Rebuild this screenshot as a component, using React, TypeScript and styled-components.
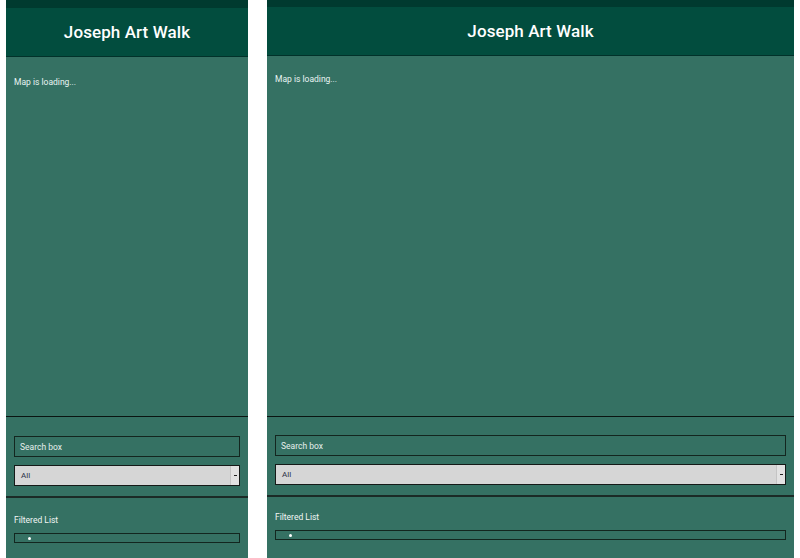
import React from "react";
import styled, { createGlobalStyle } from "styled-components";

const Global = createGlobalStyle`
  html, body { margin: 0; padding: 0; background: #ffffff; }
  body { font-family: Roboto, "Liberation Sans", sans-serif; }
`;

const Page = styled.div`
  display: flex;
  gap: 19px;
  padding-left: 6px;
  height: 558px;
  overflow: hidden;
`;

const Panel = styled.div<{ $w: number }>`
  width: ${(p) => p.$w}px;
  height: 558px;
  display: flex;
  flex-direction: column;
  background: #357163;
  overflow: hidden;
`;

const TopStrip = styled.div<{ $h: number }>`
  height: ${(p) => p.$h}px;
  background: #003a2f;
  flex: none;
`;

const Header = styled.header`
  height: 48px;
  flex: none;
  background: #024d3e;
  border-bottom: 1px solid #01322a;
  display: flex;
  align-items: center;
  justify-content: center;
`;

const Title = styled.h1`
  margin: 0;
  font-family: Roboto, "Liberation Sans", sans-serif;
  font-weight: 500;
  font-size: 17px;
  color: #ffffff;
  letter-spacing: 0.1px;
`;

const MapArea = styled.div<{ $pt: number }>`
  flex: 1;
  padding: ${(p) => p.$pt}px 8px 0;
`;

const SmallText = styled.div<{ $color?: string }>`
  font-size: 8.5px;
  line-height: 10px;
  color: ${(p) => p.$color || "#e8f4f2"};
`;

const Controls = styled.div<{ $h: number; $pt: number }>`
  height: ${(p) => p.$h}px;
  flex: none;
  box-sizing: border-box;
  border-top: 1px solid #0a1411;
  padding: ${(p) => p.$pt}px 8px 0;
  display: flex;
  flex-direction: column;
  gap: 8px;
`;

const SearchBox = styled.div`
  height: 21px;
  box-sizing: border-box;
  border: 1.5px solid #13261f;
  display: flex;
  align-items: center;
  padding-left: 5px;
  font-size: 8.5px;
  color: #e6efec;
`;

const Select = styled.div`
  height: 21px;
  box-sizing: border-box;
  border: 1.5px solid #151a18;
  background: #d6d6d6;
  display: flex;
  align-items: center;
  font-size: 8px;
  color: #2a2f45;
`;

const SelectLabel = styled.span`
  flex: 1;
  padding-left: 6px;
`;

const SelectArrow = styled.span`
  width: 8px;
  align-self: stretch;
  border-left: 1px solid #c4c4c4;
  background: #e2e2e2;
  display: flex;
  align-items: center;
  justify-content: center;
  &::after {
    content: "";
    width: 3px;
    height: 1px;
    background: #222;
  }
`;

const ListSection = styled.div<{ $h: number; $pt: number }>`
  flex: none;
  height: ${(p) => p.$h}px;
  box-sizing: border-box;
  border-top: 2px solid #1b2a26;
  padding: ${(p) => p.$pt}px 8px 0;
  display: flex;
  flex-direction: column;
  gap: 8px;
`;

const ListBox = styled.ul`
  margin: 0;
  padding: 0 0 0 13px;
  height: 10px;
  box-sizing: border-box;
  border: 1.5px solid #13261f;
  list-style: none;
  display: flex;
  align-items: center;
`;

const Bullet = styled.li`
  width: 3px;
  height: 3px;
  border-radius: 50%;
  background: #ffffff;
`;

type ViewProps = {
  width: number;
  strip: number;
  mapPad: number;
  controlsH: number;
  controlsPad: number;
  listH: number;
  listPad: number;
};

function View({ width, strip, mapPad, controlsH, controlsPad, listH, listPad }: ViewProps) {
  return (
    <Panel $w={width}>
      <TopStrip $h={strip} />
      <Header>
        <Title>Joseph Art Walk</Title>
      </Header>
      <MapArea $pt={mapPad}>
        <SmallText>Map is loading...</SmallText>
      </MapArea>
      <Controls $h={controlsH} $pt={controlsPad}>
        <SearchBox>Search box</SearchBox>
        <Select>
          <SelectLabel>All</SelectLabel>
          <SelectArrow />
        </Select>
      </Controls>
      <ListSection $h={listH} $pt={listPad}>
        <SmallText $color="#f2f6f5">Filtered List</SmallText>
        <ListBox>
          <Bullet />
        </ListBox>
      </ListSection>
    </Panel>
  );
}

export default function App() {
  return (
    <>
      <Global />
      <Page>
        <View width={242} strip={8} mapPad={20} controlsH={80} controlsPad={19} listH={62} listPad={17} />
        <View width={527} strip={7} mapPad={18} controlsH={79} controlsPad={18} listH={63} listPad={15} />
      </Page>
    </>
  );
}
